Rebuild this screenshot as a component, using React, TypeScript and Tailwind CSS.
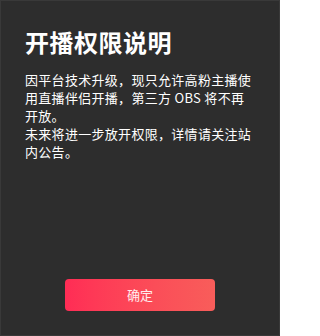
export default function App() {
  return (
    <div
      className="w-[280px] h-[336px] bg-[#2d2d2d] border border-[#393939] flex flex-col px-[24px] pt-[25px] pb-[24px]"
      style={{ fontFamily: '"Noto Sans CJK SC", "Noto Sans", sans-serif' }}
    >
      <h1 className="text-[24px] leading-[32px] font-bold tracking-[0.5px] text-white">开播权限说明</h1>
      <div className="mt-[13px] text-[13px] leading-[18px] tracking-[0.3px] text-white">
        <p>因平台技术升级，现只允许高粉主播使用直播伴侣开播，第三方 OBS 将不再开放。</p>
        <p>未来将进一步放开权限，详情请关注站内公告。</p>
      </div>
      <div className="mt-auto flex justify-center">
        <button className="w-[150px] h-[32px] rounded-[4px] bg-gradient-to-r from-[#ff2c55] to-[#f85d5a] text-[13px] text-white/90">
          确定
        </button>
      </div>
    </div>
  );
}
